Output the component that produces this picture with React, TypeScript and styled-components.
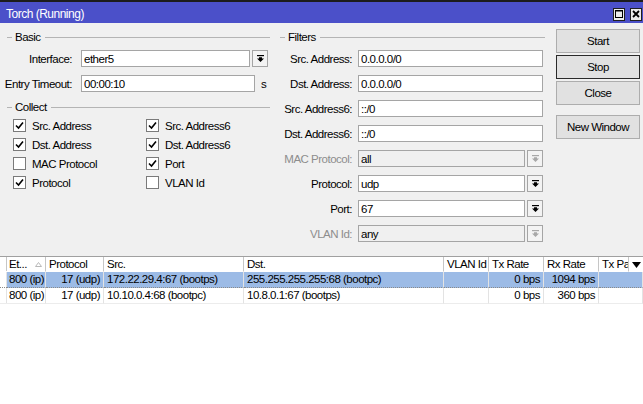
import React from 'react';
import styled, { createGlobalStyle } from 'styled-components';

const GlobalStyle = createGlobalStyle`
    html, body {
        margin: 0;
        padding: 0;
        background: #ffffff;
    }
    body {
        font-family: "Liberation Sans", Arial, sans-serif;
        font-size: 11.5px;
        letter-spacing: -0.5px;
        color: #000;
    }
    * {
        box-sizing: border-box;
    }
    input, button {
        letter-spacing: inherit;
    }
`;

const Window = styled.div`
    width: 643px;
    height: 404px;
    display: flex;
    flex-direction: column;
    border-top: 2px solid #1c1c1c;
    overflow: hidden;
`;

const TitleBar = styled.div`
    flex: none;
    height: 21px;
    background: #4b50c9;
    display: flex;
    align-items: center;
    justify-content: space-between;
    padding: 2px 1px 0 6px;
`;

const Title = styled.span`
    color: #fff;
    font-size: 12px;
`;

const TitleButtons = styled.div`
    display: flex;
    gap: 5px;
    padding-top: 1px;
`;

const TitleButton = styled.div`
    width: 12px;
    height: 13px;
    background: #ececec;
    border: 1px solid #202020;
    display: flex;
    align-items: center;
    justify-content: center;
`;

const Top = styled.div`
    flex: none;
    height: 233px;
    background: #f0f0f0;
    display: flex;
`;

const Panel = styled.div<{ $width: number }>`
    flex: none;
    width: ${p => p.$width}px;
    padding-top: 7px;
    display: flex;
    flex-direction: column;
`;

const Legend = styled.div<{ $indent: number; $end: number; $top?: number }>`
    height: 14px;
    display: flex;
    align-items: center;
    gap: 3px;
    margin-top: ${p => p.$top ?? 0}px;
    padding-left: ${p => p.$indent}px;
    padding-right: ${p => p.$end}px;
    white-space: nowrap;

    &::before {
        content: '';
        width: 5px;
        height: 1px;
        background: #b4b4b4;
    }
    &::after {
        content: '';
        flex: 1;
        height: 1px;
        margin-left: 1px;
        background: #b4b4b4;
    }
`;

const Fields = styled.div`
    display: flex;
    flex-direction: column;
    gap: 8px;
    margin-top: 6px;
`;

const Field = styled.div`
    display: flex;
    align-items: center;
    height: 17px;
`;

const Label = styled.span<{ $width: number; $gap: number; $disabled?: boolean }>`
    flex: none;
    width: ${p => p.$width}px;
    margin-right: ${p => p.$gap}px;
    text-align: right;
    white-space: nowrap;
    color: ${p => (p.$disabled ? '#8d8d8d' : '#000')};
`;

const TextBox = styled.input<{ $width: number }>`
    flex: none;
    width: ${p => p.$width}px;
    height: 17px;
    margin: 0;
    padding: 0 2px;
    border: 1px solid #a5a5a5;
    background: #fff;
    font: inherit;
    color: #000;
    -webkit-text-fill-color: #000;
    outline: none;

    &:disabled {
        background: #f0f0f0;
    }
`;

const DropButton = styled.div<{ $disabled?: boolean }>`
    flex: none;
    width: 16px;
    height: 17px;
    margin-left: 2px;
    border: 1px solid #a5a5a5;
    background: #f3f3f3;
    display: flex;
    align-items: center;
    justify-content: center;
    color: ${p => (p.$disabled ? '#a8a8a8' : '#000')};
`;

const Unit = styled.span`
    margin-left: 6px;
`;

const CheckGrid = styled.div`
    display: grid;
    grid-template-columns: 133px 1fr;
    grid-auto-rows: 19px;
    margin-top: 2px;
    padding-left: 13px;
`;

const CheckItem = styled.label`
    display: flex;
    align-items: center;
    gap: 6px;
    white-space: nowrap;
`;

const CheckBox = styled.span`
    width: 13px;
    height: 13px;
    border: 1px solid #7a7a7a;
    background: #fff;
    display: flex;
    align-items: center;
    justify-content: center;
`;

const ButtonColumn = styled.div`
    flex: none;
    width: 95px;
    padding: 6px 0 0 8px;
    display: flex;
    flex-direction: column;
    gap: 2px;
`;

const Button = styled.button<{ $focused?: boolean; $space?: number }>`
    width: 84px;
    height: 24px;
    margin: ${p => p.$space ?? 0}px 0 0;
    padding: 0;
    border: 1px solid ${p => (p.$focused ? '#2a2a2a' : '#adadad')};
    background: #e1e1e1;
    font: inherit;
    color: #000;
`;

const Table = styled.div`
    flex: 1;
    background: #fff;
    border-top: 1px solid #a0a0a0;
`;

const Row = styled.div<{ $header?: boolean; $selected?: boolean }>`
    display: grid;
    grid-template-columns: 6px 40px 58px 140px 200px 45px 55px 55px 30px 1fr;
    height: ${p => (p.$header ? 15 : 16)}px;
    line-height: 15px;
    background: ${p => (p.$selected ? '#9cbbe6' : '#fff')};
`;

const Cell = styled.div<{ $header?: boolean; $right?: boolean; $span?: number; $selected?: boolean; $gutter?: boolean }>`
    grid-column: span ${p => p.$span ?? 1};
    display: flex;
    align-items: center;
    justify-content: ${p => (p.$right ? 'flex-end' : 'space-between')};
    padding: 0 3px;
    overflow: hidden;
    white-space: nowrap;
    background: ${p => (p.$gutter ? '#fff' : 'transparent')};
    border-right: 1px solid ${p => (p.$header ? '#c6c6c6' : '#e3e3e3')};
    border-bottom: 1px ${p => (p.$selected ? 'dotted #8a8a8a' : p.$header ? 'solid #fff' : 'solid #ececec')};
`;

const ColumnMenu = styled.div`
    display: flex;
    align-items: center;
    justify-content: center;
`;

const DropIcon = () => (
    <svg width="7" height="7" viewBox="0 0 7 7">
        <rect x="0" y="0" width="7" height="1.2" fill="currentColor" />
        <polygon points="2,2.2 5,2.2 5,3.6 7,3.6 3.5,7 0,3.6 2,3.6" fill="currentColor" />
    </svg>
);

const CheckMark = () => (
    <svg width="9" height="9" viewBox="0 0 9 9">
        <polyline points="1,4.5 3.5,7 8,1.5" fill="none" stroke="#000" strokeWidth="1.6" />
    </svg>
);

const SortArrow = () => (
    <svg width="7" height="5" viewBox="0 0 7 5">
        <polygon points="0.5,4.5 3.5,0.5 6.5,4.5" fill="none" stroke="#b8b8b8" strokeWidth="1" />
    </svg>
);

type Check = { label: string; checked: boolean };

const checks: Check[] = [
    { label: 'Src. Address', checked: true },
    { label: 'Src. Address6', checked: true },
    { label: 'Dst. Address', checked: true },
    { label: 'Dst. Address6', checked: true },
    { label: 'MAC Protocol', checked: false },
    { label: 'Port', checked: true },
    { label: 'Protocol', checked: true },
    { label: 'VLAN Id', checked: false },
];

type Filter = { label: string; value: string; drop?: boolean; disabled?: boolean };

const filters: Filter[] = [
    { label: 'Src. Address:', value: '0.0.0.0/0' },
    { label: 'Dst. Address:', value: '0.0.0.0/0' },
    { label: 'Src. Address6:', value: '::/0' },
    { label: 'Dst. Address6:', value: '::/0' },
    { label: 'MAC Protocol:', value: 'all', drop: true, disabled: true },
    { label: 'Protocol:', value: 'udp', drop: true },
    { label: 'Port:', value: '67', drop: true },
    { label: 'VLAN Id:', value: 'any', drop: true, disabled: true },
];

const rows = [
    {
        eth: '800 (ip)',
        protocol: '17 (udp)',
        src: '172.22.29.4:67 (bootps)',
        dst: '255.255.255.255:68 (bootpc)',
        tx: '0 bps',
        rx: '1094 bps',
        selected: true,
    },
    {
        eth: '800 (ip)',
        protocol: '17 (udp)',
        src: '10.10.0.4:68 (bootpc)',
        dst: '10.8.0.1:67 (bootps)',
        tx: '0 bps',
        rx: '360 bps',
        selected: false,
    },
];

const App: React.FC = () => {
    return (
        <>
            <GlobalStyle />
            <Window>
                <TitleBar>
                    <Title>Torch (Running)</Title>
                    <TitleButtons>
                        <TitleButton>
                            <svg width="8" height="8" viewBox="0 0 8 8">
                                <rect x="0.5" y="0.5" width="7" height="7" fill="none" stroke="#000" strokeWidth="1" />
                                <rect x="0.5" y="0.5" width="7" height="1" fill="#000" />
                            </svg>
                        </TitleButton>
                        <TitleButton>
                            <svg width="8" height="8" viewBox="0 0 8 8">
                                <path d="M1 1 L7 7 M7 1 L1 7" stroke="#000" strokeWidth="1.8" />
                            </svg>
                        </TitleButton>
                    </TitleButtons>
                </TitleBar>

                <Top>
                    <Panel $width={272}>
                        <Legend $indent={7} $end={2}>Basic</Legend>
                        <Fields>
                            <Field>
                                <Label $width={72} $gap={9}>Interface:</Label>
                                <TextBox $width={169} value="ether5" readOnly />
                                <DropButton>
                                    <DropIcon />
                                </DropButton>
                            </Field>
                            <Field>
                                <Label $width={72} $gap={9}>Entry Timeout:</Label>
                                <TextBox $width={174} value="00:00:10" readOnly />
                                <Unit>s</Unit>
                            </Field>
                        </Fields>
                        <Legend $indent={7} $end={2} $top={8}>Collect</Legend>
                        <CheckGrid>
                            {checks.map(c => (
                                <CheckItem key={c.label}>
                                    <CheckBox>{c.checked && <CheckMark />}</CheckBox>
                                    {c.label}
                                </CheckItem>
                            ))}
                        </CheckGrid>
                    </Panel>

                    <Panel $width={276}>
                        <Legend $indent={8} $end={3}>Filters</Legend>
                        <Fields>
                            {filters.map(f => (
                                <Field key={f.label}>
                                    <Label $width={80} $gap={6} $disabled={f.disabled}>
                                        {f.label}
                                    </Label>
                                    <TextBox
                                        $width={f.drop ? 167 : 185}
                                        value={f.value}
                                        disabled={f.disabled}
                                        readOnly
                                    />
                                    {f.drop && (
                                        <DropButton $disabled={f.disabled}>
                                            <DropIcon />
                                        </DropButton>
                                    )}
                                </Field>
                            ))}
                        </Fields>
                    </Panel>

                    <ButtonColumn>
                        <Button>Start</Button>
                        <Button $focused>Stop</Button>
                        <Button>Close</Button>
                        <Button $space={8}>New Window</Button>
                    </ButtonColumn>
                </Top>

                <Table>
                    <Row $header>
                        <Cell $header />
                        <Cell $header>
                            Et...
                            <SortArrow />
                        </Cell>
                        <Cell $header>Protocol</Cell>
                        <Cell $header>Src.</Cell>
                        <Cell $header>Dst.</Cell>
                        <Cell $header>VLAN Id</Cell>
                        <Cell $header>Tx Rate</Cell>
                        <Cell $header>Rx Rate</Cell>
                        <Cell $header>Tx Pa</Cell>
                        <ColumnMenu>
                            <svg width="9" height="6" viewBox="0 0 9 6">
                                <polygon points="0,0 9,0 4.5,6" fill="#000" />
                            </svg>
                        </ColumnMenu>
                    </Row>
                    {rows.map((r, i) => (
                        <Row key={i} $selected={r.selected}>
                            <Cell $gutter $selected={r.selected} />
                            <Cell $selected={r.selected}>{r.eth}</Cell>
                            <Cell $right $selected={r.selected}>{r.protocol}</Cell>
                            <Cell $selected={r.selected}>{r.src}</Cell>
                            <Cell $selected={r.selected}>{r.dst}</Cell>
                            <Cell $selected={r.selected} />
                            <Cell $right $selected={r.selected}>{r.tx}</Cell>
                            <Cell $right $selected={r.selected}>{r.rx}</Cell>
                            <Cell $span={2} $selected={r.selected} />
                        </Row>
                    ))}
                </Table>
            </Window>
        </>
    );
};

export default App;
